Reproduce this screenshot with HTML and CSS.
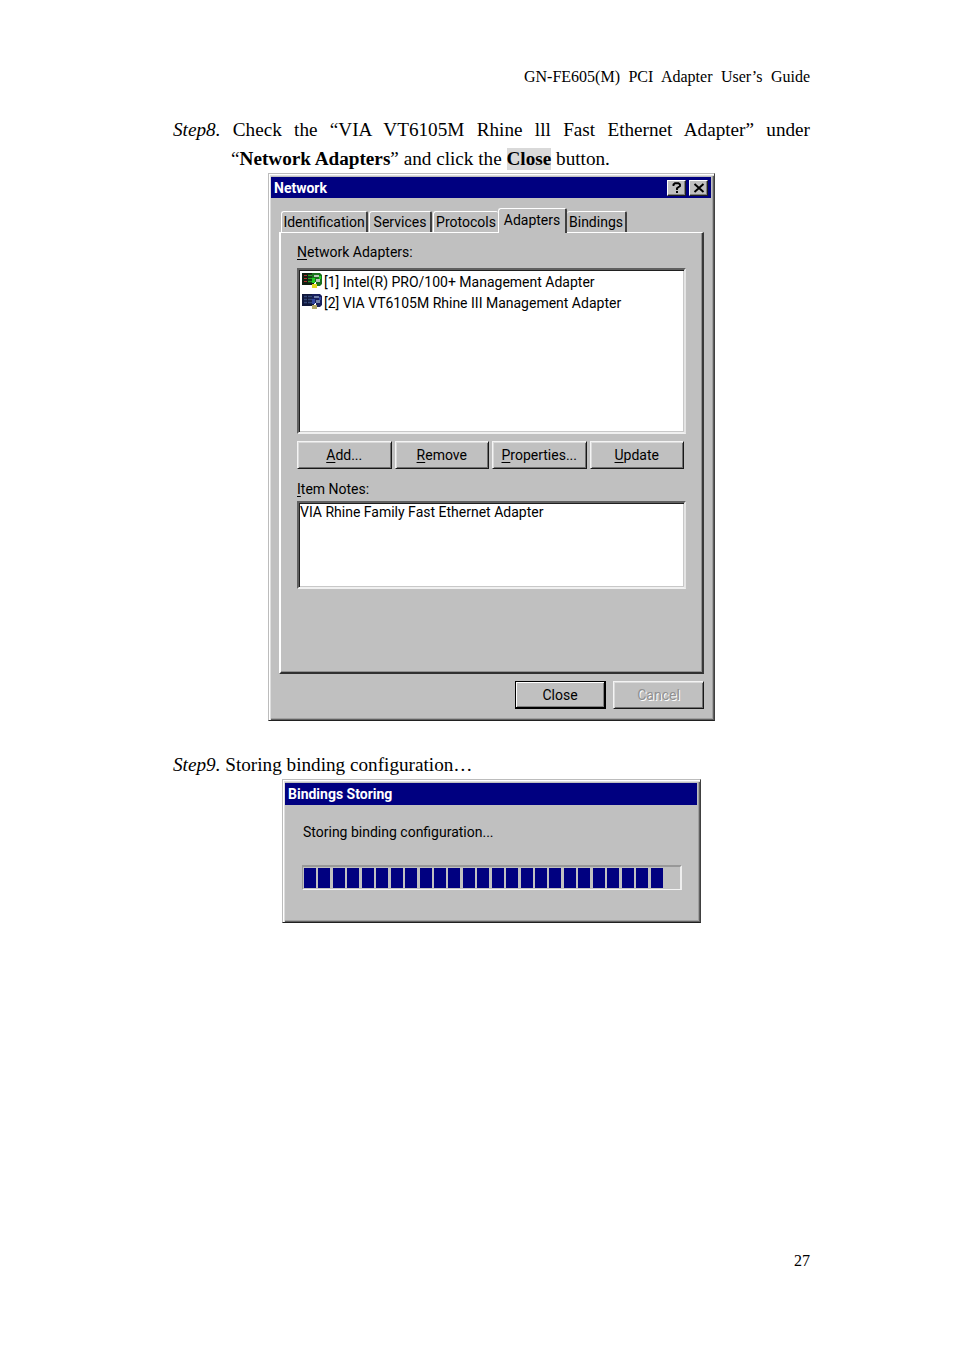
FILE: index.html
```html
<!DOCTYPE html>
<html lang="en">
<head>
<meta charset="utf-8">
<title>GN-FE605(M) PCI Adapter User’s Guide</title>
<link rel="stylesheet" href="styles.css">
</head>
<body>
<div class="page">
  <header class="running-head">GN-FE605(M) PCI Adapter User’s Guide</header>
  <main>
    <div class="step">
      <div class="line justified"><i>Step8.</i> Check the “VIA VT6105M Rhine lll Fast Ethernet Adapter” under</div>
      <div class="line indent">“<b>Network Adapters</b>” and click the <b class="mark">Close</b> button.</div>
    </div>
    <section class="window network">
      <div class="titlebar"><span class="t-network">Network</span>
        <span class="caption-buttons">
          <span class="cap"><svg width="10" height="12" viewBox="0 0 10 12"><path d="M1.5 4V2.5L3 1.2H6.5L8 2.5V4L5 6.3V8M5 9V11" fill="none" stroke="#000" stroke-width="1.9"/></svg></span>
          <span class="cap"><svg width="12" height="10" viewBox="0 0 12 10"><path d="M1.5 1L10.5 9M10.5 1L1.5 9" fill="none" stroke="#000" stroke-width="1.9"/></svg></span>
        </span>
      </div>
      <div class="tabs">
        <span class="tab identification"><span>Identification</span></span>
        <span class="tab services"><span>Services</span></span>
        <span class="tab protocols"><span>Protocols</span></span>
        <span class="tab adapters"><span>Adapters</span></span>
        <span class="tab bindings"><span>Bindings</span></span>
      </div>
      <div class="panel">
        <div class="label l-adapters"><span><u>N</u>etwork Adapters:</span></div>
        <div class="field list">
          <div class="item">
            <svg width="20" height="17" viewBox="0 0 20 17"><path d="M0 1H12V13H0z" fill="#102010"/><path d="M2 3.5H5M2 6.5H5M2 9.5H5" stroke="#b03030" stroke-width="1.2"/><path d="M6 3.5H10M6 6.5H10M6 9.5H10" stroke="#28a028" stroke-width="1.4"/><path d="M10 1H18L20 3V12L18 14H14V10H10z" fill="#18701c"/><path d="M12 3H17V5H12zM14 7H18V10H14z" fill="#b8c8b8"/><path d="M10 6H13V11H10zM17 4H19V7H17z" fill="#20d020"/><path d="M10 12H15V16H10z" fill="#e0d820"/></svg>
            <span class="a1">[1] Intel(R) PRO/100+ Management Adapter</span>
          </div>
          <div class="item">
            <svg width="20" height="17" viewBox="0 0 20 17"><path d="M0 1H12V13H0z" fill="#10183c"/><path d="M2 3.5H5M2 6.5H5M2 9.5H5M6 3.5H10M6 6.5H10M6 9.5H10" stroke="#344878" stroke-width="1.3"/><path d="M10 1H18L20 3V12L18 14H14V10H10z" fill="#18205c"/><path d="M12 3H17V5H12zM14 7H18V10H14z" fill="#7080a8"/><path d="M10 6H13V11H10zM17 4H19V7H17z" fill="#3448a0"/><path d="M10 12H15V16H10z" fill="#b0a868"/></svg>
            <span class="a2">[2] VIA VT6105M Rhine III Management Adapter</span>
          </div>
        </div>
        <div class="buttons">
          <span class="button"><span class="b-add"><u>A</u>dd...</span></span>
          <span class="button"><span class="b-remove"><u>R</u>emove</span></span>
          <span class="button"><span class="b-props"><u>P</u>roperties...</span></span>
          <span class="button"><span class="b-update"><u>U</u>pdate</span></span>
        </div>
        <div class="label l-notes"><span><u>I</u>tem Notes:</span></div>
        <div class="field notes"><span>VIA Rhine Family Fast Ethernet Adapter</span></div>
      </div>
      <div class="footer">
        <span class="button default"><span>Close</span></span>
        <span class="button disabled"><span>Cancel</span></span>
      </div>
    </section>
    <div class="step nine"><div class="line"><i>Step9.</i> Storing binding configuration…</div></div>
    <section class="window storing">
      <div class="titlebar"><span class="t-storing">Bindings Storing</span></div>
      <div class="label l-storing"><span>Storing binding configuration...</span></div>
      <div class="progress">
        <i></i><i></i><i></i><i></i><i></i><i></i><i></i><i></i><i></i><i></i><i></i><i></i><i></i><i></i><i></i><i></i><i></i><i></i><i></i><i></i><i></i><i></i><i></i><i></i><i></i>
      </div>
    </section>
  </main>
  <footer class="page-number">27</footer>
</div>
</body>
</html>
```
FILE: styles.css
```css
* { box-sizing: border-box; }
body { margin: 0; background: #fff; color: #000; font-family: "Liberation Serif", serif; }
.page { width: 954px; height: 1351px; padding: 66px 144px 0 173px; display: flex; flex-direction: column; }
.running-head { width: 286px; height: 22px; line-height: 22px; margin-left: auto; font-size: 16px; text-align-last: justify; white-space: nowrap; }
main { margin-top: 27px; }
.line { height: 29px; line-height: 29px; font-size: 19.2px; white-space: nowrap; }
.justified { text-align-last: justify; }
.indent { padding-left: 58px; }
.mark { display: inline-block; height: 22px; line-height: 22px; background: #d9d9d9; }
.nine { margin-top: 29px; }
.page-number { margin-top: 328px; height: 20px; line-height: 20px; font-size: 16px; text-align: right; }

/* Classic desktop windows */
.window { background: #c0c0c0; font: 14px/16px Roboto, "Liberation Sans", Arial, sans-serif; white-space: nowrap;
  border: 1px solid; border-color: #bcbcbc #404040 #202020 #bcbcbc;
  box-shadow: inset 1px 1px #fff, inset 2px 2px #dedede, inset -1px -1px #606060, inset -2px -2px #a0a0a0; }
.window svg { display: block; flex: none; }
.window u { text-decoration: underline; text-decoration-thickness: 1px; text-underline-offset: 2px; text-decoration-skip-ink: none; }
.network { width: 447px; height: 548px; margin-left: 95px; padding: 3px 3px 0 2px; }
.storing { width: 419px; height: 144px; margin-left: 109px; padding: 3px 3px 0 2px; }
.titlebar { display: flex; align-items: center; justify-content: space-between; height: 21px; padding: 0 3px; background: #000080; color: #fff; font-weight: bold; }
.storing .titlebar { height: 22px; }
.caption-buttons { display: flex; gap: 3px; }
.cap { width: 19px; height: 16px; display: flex; align-items: center; justify-content: center; background: #c0c0c0; border: 1px solid; border-color: #fff #202020 #202020 #fff; box-shadow: inset -1px -1px #808080; }

.tabs { display: flex; align-items: flex-end; height: 34px; padding-left: 10px; }
.tab { height: 21px; display: flex; justify-content: center; padding-top: 2px; border-top: 1px solid #fff; border-left: 1px solid #fff; border-right: 2px solid #404040; border-radius: 3px 2px 0 0; }
.identification { width: 87px; }
.services { width: 63px; margin-left: 1px; }
.protocols { width: 65px; margin-left: 1px; border-right: 0; }
.adapters { width: 69px; height: 25px; margin-bottom: -1px; padding-top: 3px; background: #c0c0c0; position: relative; }
.bindings { width: 60px; border-left: 0; }

.panel { width: 425px; height: 442px; margin-left: 8px; padding: 11px 0 0 16px; border: 2px solid; border-color: #fff #383838 #303030 #fff; border-top-width: 1px; box-shadow: inset -1px -1px #909090; }
.label { height: 16px; }
.field { background: #fff; border: 2px solid; border-color: #606060 #e4e4e4 #f0f0f0 #606060; box-shadow: inset 1px 1px #202020, inset -1px -1px #c8c8c8; }
.list { width: 389px; height: 166px; margin-top: 8px; padding: 1px 0 0 3px; }
.item { display: flex; align-items: center; height: 21px; gap: 2px; }
.item svg { margin-top: -2px; }
.buttons { display: flex; gap: 3px; margin-top: 7px; }
.button { display: flex; justify-content: center; align-items: center; width: 94.5px; height: 28px; border: 1px solid; border-color: #f4f4f4 #181818 #181818 #f4f4f4; box-shadow: inset 1px 1px #dadada, inset -1px -1px #707070; }
.l-notes { margin-top: 12px; }
.notes { width: 389px; height: 88px; margin-top: 4px; padding: 1px 0 0 1px; }
.footer { display: flex; justify-content: flex-end; gap: 7px; margin-top: 7px; padding-right: 7px; }
.footer .button { width: 91px; }
.default { border: 2px solid #000; border-width: 1px 2px 2px 1px; box-shadow: inset 1px 1px #fff, inset -1px -1px #808080; }
.disabled { color: #909090; text-shadow: 1px 1px #fff; }

.l-storing { margin: 19px 0 0 18px; }
.progress { display: flex; gap: 2.45px; width: 380px; height: 25px; margin: 25px 0 0 17px; padding: 1px 0 2px 1px; border: 2px solid; border-color: #989898 #eee #f4f4f4 #989898; border-width: 2px 2px 1px 1px; }
.progress i { width: 12px; height: 20px; background: #000080; }
```
